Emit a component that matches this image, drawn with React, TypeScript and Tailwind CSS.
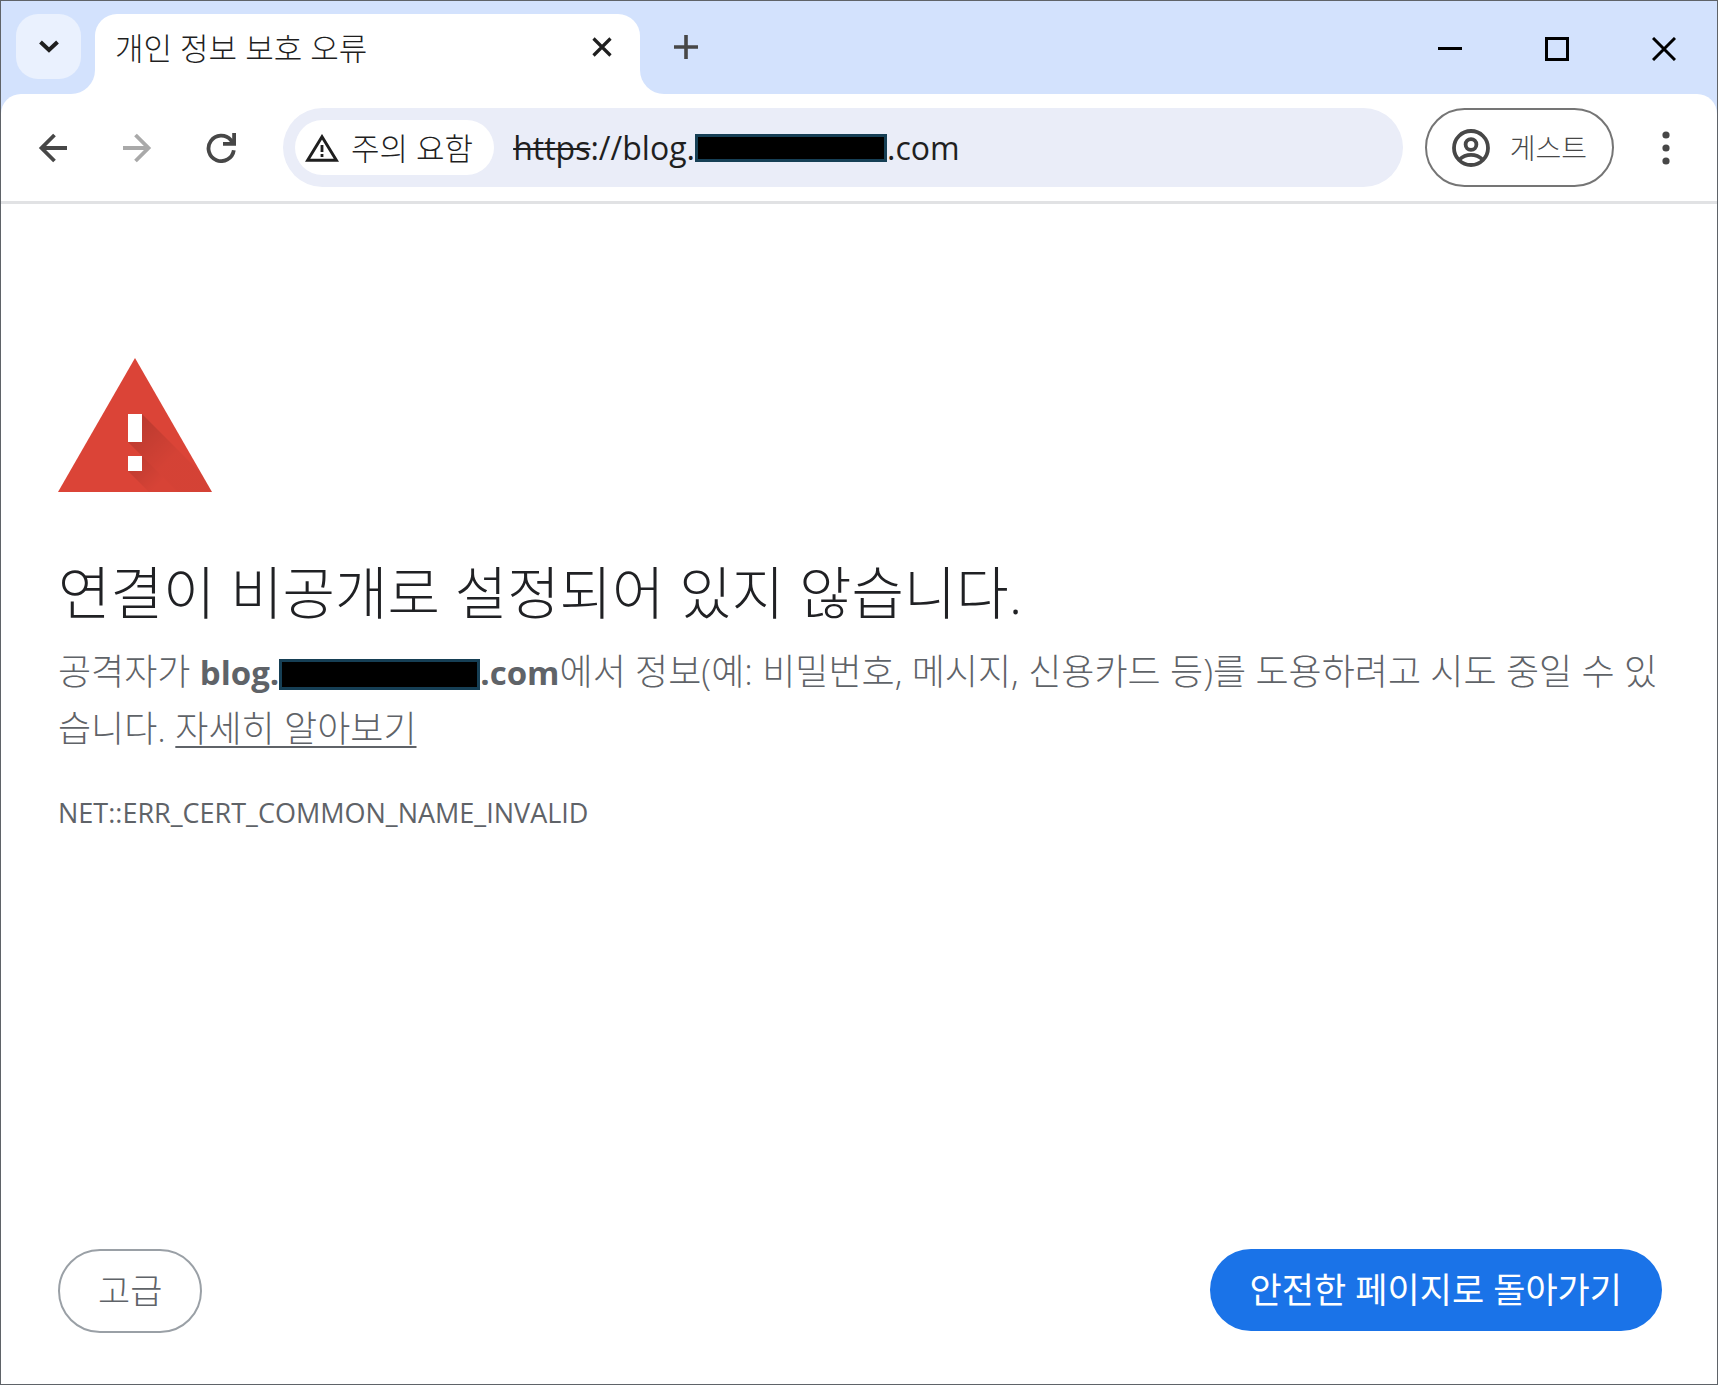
import type { ReactNode } from 'react';

interface IconButtonProps {
  label: string;
  className?: string;
  disabled?: boolean;
  children: ReactNode;
}

function IconButton({ label, className = '', disabled, children }: IconButtonProps) {
  return (
    <button
      type="button"
      aria-label={label}
      disabled={disabled}
      className={`flex shrink-0 items-center justify-center ${className}`}
    >
      {children}
    </button>
  );
}

function TabStrip() {
  return (
    <div className="flex h-[93px] bg-white">
      {/* Tab search */}
      <div className="flex w-[94px] shrink-0 items-start rounded-br-[24px] bg-[#d3e2fd] pt-[13px] pl-[15px]">
        <IconButton label="탭 검색" className="size-[65px] rounded-[22px] bg-[#eaf1fe]">
          <svg width="20" height="14" viewBox="0 0 20 14" fill="none" stroke="#1f1f1f" strokeWidth="4">
            <path d="M1.5 2 10 10 18.5 2" />
          </svg>
        </IconButton>
      </div>

      {/* Active tab */}
      <div className="w-[545px] shrink-0 bg-[#d3e2fd] pt-[13px]">
        <div className="flex h-full items-start justify-between rounded-t-[22px] bg-white pr-7 pl-5">
          <span className="pt-3 text-[31px] leading-[44px] font-light text-[#1f1f1f]">개인 정보 보호 오류</span>
          <IconButton label="탭 닫기" className="mt-[23px] size-5">
            <svg width="20" height="20" viewBox="0 0 20 20" fill="none" stroke="#1f1f1f" strokeWidth="3.2">
              <path d="M1.5 1.5 18.5 18.5M18.5 1.5 1.5 18.5" />
            </svg>
          </IconButton>
        </div>
      </div>

      {/* New tab and window controls */}
      <div className="flex flex-1 items-start justify-between rounded-bl-[24px] bg-[#d3e2fd] pt-6 pr-[41px] pl-[34px]">
        <IconButton label="새 탭" className="mt-[10px] size-6">
          <svg width="24" height="24" viewBox="0 0 24 24" fill="none" stroke="#474747" strokeWidth="3.6">
            <path d="M12 0V24M0 12H24" />
          </svg>
        </IconButton>
        <div className="mt-3 flex items-center gap-[83px]">
          <IconButton label="최소화" className="size-6">
            <svg width="24" height="24" viewBox="0 0 24 24" stroke="#000" strokeWidth="3">
              <path d="M0 11.5H24" />
            </svg>
          </IconButton>
          <IconButton label="최대화" className="size-6">
            <svg width="24" height="24" viewBox="0 0 24 24" fill="none" stroke="#000" strokeWidth="3">
              <path d="M1.5 1.5H22.5V22.5H1.5Z" />
            </svg>
          </IconButton>
          <IconButton label="닫기" className="size-6">
            <svg width="24" height="24" viewBox="0 0 24 24" fill="none" stroke="#000" strokeWidth="3">
              <path d="M1 1 23 23M23 1 1 23" />
            </svg>
          </IconButton>
        </div>
      </div>
    </div>
  );
}

function AddressBar() {
  return (
    <div className="flex h-[79px] flex-1 items-center rounded-full bg-[#eaedf8] pl-3">
      <button
        type="button"
        className="flex h-[55px] shrink-0 items-center gap-3 rounded-full bg-white pr-[21px] pl-[10px] text-[#1f1f1f]"
      >
        <svg width="34" height="28" viewBox="0 0 34 28">
          <path d="M17 2.8 31.4 26.3H2.6Z" fill="none" stroke="#1f1f1f" strokeWidth="3" />
          <path d="M15.6 11h2.8v7h-2.8zM15.6 20h2.8v3h-2.8z" fill="#1f1f1f" />
        </svg>
        <span className="text-[31px] leading-[44px] font-light">주의 요함</span>
      </button>
      <div
        role="textbox"
        aria-label="주소창"
        tabIndex={0}
        className="flex items-center pl-[19px] text-[32px] leading-[44px] whitespace-nowrap text-[#1f1f1f]"
      >
        <span className="line-through decoration-2">https</span>
        <span>://blog.</span>
        <span className="h-7 w-48 border-3 border-[#163f55] bg-black"></span>
        <span>.com</span>
      </div>
    </div>
  );
}

function Toolbar() {
  return (
    <div className="bg-[#d3e2fd]">
      <div className="flex h-[110px] items-center rounded-t-[20px] border-b-3 border-[#e1e2e4] bg-white pr-[47px] pl-[37px]">
        <div className="flex items-center gap-[54px]">
          <IconButton label="뒤로" className="size-[30px]">
            <svg width="30" height="30" viewBox="0 0 30 30" fill="none" stroke="#474747" strokeWidth="3.8">
              <path d="M29 15H4M16.5 2 3.5 15 16.5 28" />
            </svg>
          </IconButton>
          <IconButton label="앞으로" disabled className="size-[30px]">
            <svg width="30" height="30" viewBox="0 0 30 30" fill="none" stroke="#a9a9a9" strokeWidth="3.8">
              <path d="M1 15H26M13.5 2 26.5 15 13.5 28" />
            </svg>
          </IconButton>
          <IconButton label="새로고침" className="size-[30px]">
            <svg width="30" height="30" viewBox="0 0 30 30" fill="none" stroke="#474747" strokeWidth="3.8">
              <path d="M27.8 17.2A12.7 12.7 0 1 1 24.8 7L27.5 10.5" />
              <path d="M28.1 0V10.8H17" />
            </svg>
          </IconButton>
        </div>
        <div className="ml-[47px] flex flex-1 items-center gap-[22px]">
          <AddressBar />
          <button
            type="button"
            className="flex h-[79px] shrink-0 items-center gap-5 rounded-full border-2 border-[#757575] pr-[25px] pl-[25px] text-[#474747]"
          >
            <svg width="38" height="38" viewBox="0 0 38 38" fill="none" stroke="#474747" strokeWidth="3.8">
              <circle cx="19" cy="19" r="17" />
              <circle cx="19" cy="15.5" r="5.4" />
              <path d="M7.5 30.5C11 27 15 25.8 19 25.8S27 27 30.5 30.5" />
            </svg>
            <span className="text-[28px] leading-[40px] font-light">게스트</span>
          </button>
        </div>
        <IconButton label="메뉴" className="ml-12 h-9 w-2">
          <svg width="8" height="34" viewBox="0 0 8 34" fill="#474747">
            <circle cx="4" cy="4" r="3.6" />
            <circle cx="4" cy="17" r="3.6" />
            <circle cx="4" cy="30" r="3.6" />
          </svg>
        </IconButton>
      </div>
    </div>
  );
}

function WarningIcon() {
  return (
    <svg width="154" height="134" viewBox="0 0 154 134">
      <defs>
        <linearGradient id="shade" x1="77" y1="70" x2="111" y2="104" gradientUnits="userSpaceOnUse">
          <stop offset="0" stopColor="#000" stopOpacity="0.14" />
          <stop offset="1" stopColor="#000" stopOpacity="0.03" />
        </linearGradient>
        <linearGradient id="shadeDot" x1="77" y1="105" x2="99" y2="127" gradientUnits="userSpaceOnUse">
          <stop offset="0" stopColor="#000" stopOpacity="0.12" />
          <stop offset="1" stopColor="#000" stopOpacity="0.02" />
        </linearGradient>
        <clipPath id="triangle">
          <path d="M77 0 154 134H0Z" />
        </clipPath>
      </defs>
      <path d="M77 0 154 134H0Z" fill="#db4437" />
      <g clipPath="url(#triangle)">
        <path d="M84 56 162 134H120L84 98 70 84Z" fill="url(#shade)" />
        <path d="M84 98 120 134H91L70 113Z" fill="url(#shadeDot)" />
      </g>
      <path d="M70 56h14v28H70zM70 98h14v15H70z" fill="#fff" />
    </svg>
  );
}

export default function App() {
  return (
    <div className="flex min-h-screen flex-col border border-[#5f6368] bg-white font-['Open_Sans','Noto_Sans_CJK_KR',sans-serif]">
      <header>
        <TabStrip />
        <Toolbar />
      </header>

      <main className="flex flex-1 flex-col pt-[154px] pr-[55px] pb-[51px] pl-[57px]">
        <WarningIcon />
        <h1 className="mt-16 text-[57px] leading-[72px] font-light text-[#202124]">
          연결이 비공개로 설정되어 있지 않습니다.
        </h1>
        <p className="mt-4 text-[36px] leading-[56px] font-light text-[#5f6368]">
          공격자가 <strong className="text-[33px] font-bold">blog.</strong>
          <span className="inline-block h-[31px] w-[201px] border-3 border-[#163f55] bg-black align-[-5px]"></span>
          <strong className="text-[33px] font-bold">.com</strong>에서 정보(예: 비밀번호, 메시지, 신용카드 등)를 도용하려고 시도 중일 수
          있습니다.{' '}
          <a href="#" className="underline decoration-2 underline-offset-4">
            자세히 알아보기
          </a>
        </p>
        <p className="mt-9 text-[27px] leading-[40px] text-[#5f6368]">NET::ERR_CERT_COMMON_NAME_INVALID</p>

        <div className="mt-auto flex items-start justify-between">
          <button
            type="button"
            className="h-[84px] rounded-full border-2 border-[#9aa0a6] px-[38px] text-[35px] font-light text-[#5f6368]"
          >
            고급
          </button>
          <button type="button" className="h-[82px] rounded-full bg-[#1a73e8] px-[40px] text-[35px] text-white">
            안전한 페이지로 돌아가기
          </button>
        </div>
      </main>
    </div>
  );
}
